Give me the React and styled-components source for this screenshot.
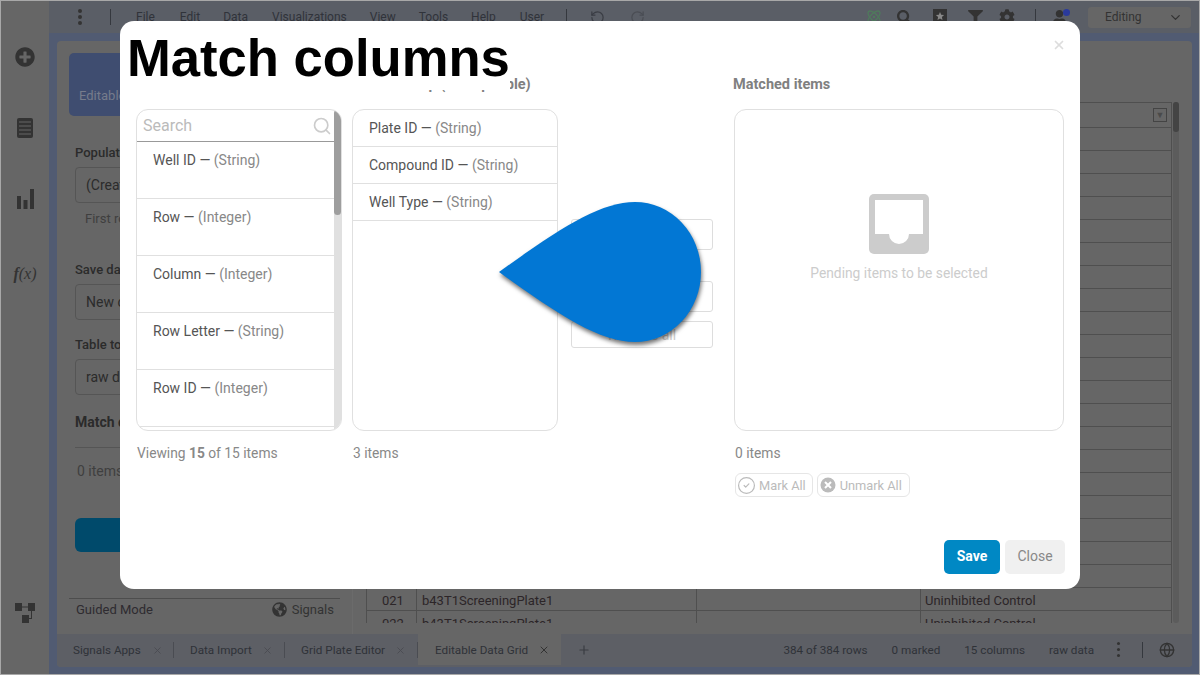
import React from 'react';
import styled, { createGlobalStyle } from 'styled-components';
import { Atom, ChevronDown, CircleCheck, Globe, Plus, RotateCcw, RotateCw, Search, X } from 'lucide-react';
import { FaCog, FaFilter, FaGlobeAmericas, FaPlusCircle, FaSearch, FaUser } from 'react-icons/fa';

const GlobalStyle = createGlobalStyle`
  html, body { margin: 0; padding: 0; }
  body { width: 1200px; height: 675px; overflow: hidden; background: #a8a8a8; font-family: Roboto, "Liberation Sans", sans-serif; }
  * { box-sizing: border-box; }
`;

// ------------------------ Page behind the modal
const Shell = styled.div`
  width: 1200px; height: 675px;
  padding: 1px;
  display: flex;
  position: relative;
`;
const Rail = styled.nav`
  width: 48px;
  background: #666;
  display: flex;
  flex-direction: column;
  align-items: center;
  padding-top: 46px;
  color: #333;
`;
const RailItem = styled.div`
  height: 73px;
  width: 100%;
  display: flex;
  justify-content: center;
  padding-top: ${(p) => p.$drop || 0}px;
  font: italic 16px "Liberation Serif", serif;
  margin-top: ${(p) => p.$push || 0}px;
`;
const Main = styled.div`
  flex: 1;
  display: flex;
  flex-direction: column;
  background: #515b72;
  min-width: 0;
`;
const TopBar = styled.header`
  height: 32px;
  background: #5a5e66;
  display: flex;
  align-items: center;
  padding: 0 8px 0 29px;
  color: #30333a;
  font-size: 12px;
`;
const Dots = styled.span`
  width: ${(p) => p.$size || 4}px; height: ${(p) => p.$size || 4}px;
  border-radius: 50%;
  background: #333;
  box-shadow: 0 -6px 0 #333, 0 6px 0 #333;
  margin: ${(p) => p.$m || '0'};
  flex: none;
`;
const Sep = styled.span`
  width: 1px; height: 16px;
  background: #35383e;
  margin: ${(p) => p.$m || '0'};
  flex: none;
`;
const MenuItem = styled.span`
  margin-right: ${(p) => p.$gap}px;
`;
const ToolIcon = styled.span`
  display: flex;
  margin-right: ${(p) => p.$gap || 0}px;
  margin-left: ${(p) => (p.$push ? 'auto' : '0')};
  color: ${(p) => p.$color || '#333'};
  position: relative;
`;
const Badge = styled.span`
  position: absolute;
  top: -1px; right: -3px;
  width: 7px; height: 7px;
  border-radius: 50%;
  background: #2a3a9c;
`;
const ModeSelect = styled.div`
  width: 103px; height: 21px;
  margin-left: 21px;
  background: #666;
  border-radius: 3px;
  display: flex;
  align-items: center;
  justify-content: space-between;
  padding: 0 8px 0 17px;
  color: #333;
`;
const Content = styled.div`
  flex: 1;
  margin: 8px 7px 7px 8px;
  border-radius: 4px;
  background: #666;
  display: flex;
  flex-direction: column;
  min-height: 0;
  overflow: hidden;
`;
const Work = styled.div`
  flex: 1;
  display: flex;
  min-height: 0;
`;
const SidePanel = styled.aside`
  width: 296px;
  padding: 12px 12px 0;
  border-right: 1px solid #6b6b6b;
  display: flex;
  flex-direction: column;
  color: #2b2b2b;
  font-size: 13px;
`;
const AppCard = styled.div`
  width: 200px; height: 63px;
  background: #3f4d70;
  border-radius: 5px;
  padding: 35px 10px 0;
  color: #767c8c;
  flex: none;
`;
const Field = styled.div`
  margin: ${(p) => p.$top}px 0 0 6px;
  font-weight: ${(p) => (p.$strong ? 700 : 500)};
  font-size: ${(p) => (p.$strong ? 14 : 13)}px;
`;
const InputBox = styled.div`
  margin: 7px 0 0 6px;
  width: 260px; height: 36px;
  border: 1px solid #555;
  border-radius: 4px;
  padding: 0 10px;
  display: flex;
  align-items: center;
  font-size: 14px;
  font-weight: 400;
`;
const Hint = styled.div`
  margin: 8px 0 0 16px;
  color: #3f3f3f;
`;
const SectionRule = styled.div`
  margin: 17px 0 0 6px;
  height: 1px;
  background: #555;
`;
const CountText = styled.div`
  margin: 15px 0 0 8px;
  font-size: 14px;
  color: #3f3f3f;
`;
const RunButton = styled.div`
  margin: 39px 0 0 6px;
  height: 34px;
  width: 260px;
  background: #004a6b;
  border-radius: 6px;
  flex: none;
`;
const SideFoot = styled.div`
  margin-top: 46px;
  height: 21px;
  border-top: 1px solid #4d4d4d;
  display: flex;
  align-items: center;
  justify-content: space-between;
  padding: 0 6px 0 7px;
  font-size: 13px;
  color: #2e2b30;
`;
const SignalsLink = styled.span`
  display: flex;
  align-items: center;
  gap: 5px;
  color: #333;
`;
const GridArea = styled.section`
  flex: 1;
  padding: 61px 12px 11px 13px;
  display: flex;
  min-width: 0;
`;
const DataGrid = styled.div`
  width: 806px;
  height: 100%;
  overflow: hidden;
  border-left: 1px solid #4f4f4f;
  border-right: 1px solid #4f4f4f;
`;
const GridHead = styled.div`
  height: 26px;
  border-top: 1px solid #4f4f4f;
  border-bottom: 1px solid #4f4f4f;
  position: relative;
`;
const HeadFilter = styled.span`
  position: absolute;
  right: 4px; top: 5px;
  width: 14px; height: 14px;
  border: 1px solid #444;
  color: #4a4a4a;
  font-size: 9px;
  line-height: 13px;
  text-align: center;
`;
const GridRow = styled.div`
  height: 23px;
  display: grid;
  grid-template-columns: 50px 280px 224px 1fr;
  border-bottom: 1px solid #4f4f4f;
  font-size: 13px;
  color: #2c2528;
`;
const GridCell = styled.div`
  padding-left: ${(p) => p.$pad || 5}px;
  border-right: 1px solid #4f4f4f;
  line-height: 26px;
  white-space: nowrap;
  overflow: hidden;
  &:last-child { border-right: 0; }
`;
const GridScroll = styled.div`
  width: 6px;
  margin-left: 1px;
  background: #5c5c5c;
  border-radius: 3px;
`;
const GridThumb = styled.div`
  height: 30px;
  background: #444;
  border-radius: 3px;
`;
const TabBar = styled.footer`
  height: 33px;
  flex: none;
  background: #5d5f65;
  display: flex;
  align-items: stretch;
  padding: 0 0 2px 0;
  font-size: 11.7px;
  line-height: 14px;
  color: #2f3238;
`;
const Tab = styled.div`
  display: flex;
  align-items: center;
  width: ${(p) => p.$w}px;
  padding-top: 1px;
  padding-left: ${(p) => (p.$active ? 17 : 16)}px;
  background: ${(p) => (p.$active ? '#666' : 'transparent')};
  position: relative;
  &::after {
    content: '';
    display: ${(p) => (p.$active ? 'none' : 'block')};
    position: absolute;
    right: 0; top: 8px;
    width: 1px; height: 16px;
    background: #4a4c52;
  }
`;
const TabClose = styled.span`
  display: flex;
  margin-left: auto;
  margin-right: ${(p) => p.$m}px;
  color: ${(p) => (p.$active ? '#333' : '#4a4c52')};
`;
const AddTab = styled.span`
  display: flex;
  align-items: center;
  margin-left: 16px;
  color: #3a3c42;
`;
const StatusGroup = styled.div`
  margin-left: auto;
  display: flex;
  align-items: center;
  gap: 24px;
  padding-top: 1px;
`;
const StatusTail = styled.div`
  display: flex;
  align-items: center;
  margin-left: 23px;
  padding-right: 17px;
`;

// ------------------------ Modal
const Modal = styled.div`
  position: absolute;
  left: 120px; top: 21px;
  width: 960px; height: 568px;
  background: #fff;
  border-radius: 14px;
  padding: 56px 15px 15px 16px;
  display: flex;
  flex-direction: column;
  color: #555;
`;
const Heading = styled.h1`
  position: absolute;
  left: 7px; top: 7px;
  margin: 0;
  padding: 0 0 2px;
  background: #fff;
  color: #000;
  font: bold 52.6px/60px "Liberation Sans", Arial, sans-serif;
  white-space: nowrap;
`;
const CloseX = styled.span`
  position: absolute;
  right: 14px; top: 17px;
  display: flex;
  color: #ddd;
`;
const Columns = styled.div`
  display: grid;
  grid-template-columns: 216px 206px 176px 330px;
`;
const ColTitle = styled.div`
  height: 14px;
  margin: 0 0 18px -1px;
  font-size: 14.5px;
  font-weight: 700;
  line-height: 16px;
  color: #808080;
  white-space: nowrap;
`;
const ListFrame = styled.div`
  width: ${(p) => p.$w || 206}px;
  height: 322px;
  border: 1px solid #e0e0e0;
  border-radius: 12px;
  overflow: hidden;
  display: flex;
`;
const ListBody = styled.div`
  flex: 1;
  min-width: 0;
`;
const SearchRow = styled.div`
  height: 32px;
  border-bottom: 1px solid #999;
  display: flex;
  align-items: center;
  justify-content: space-between;
  padding: 0 2px 0 6px;
  font-size: 16px;
  color: #bbb;
`;
const ListRow = styled.div`
  height: ${(p) => p.$h}px;
  border-bottom: 1px solid #e0e0e0;
  padding: 10px 0 0 16px;
  font-size: 14px;
  line-height: 16px;
  color: #555;
  white-space: nowrap;
`;
const TypeText = styled.span`
  color: #888;
`;
const ScrollTrack = styled.div`
  width: 7px;
  background: #e0e0e0;
  flex: none;
`;
const ScrollThumb = styled.div`
  height: 105px;
  background: #9e9e9e;
  border-radius: 4px;
`;
const Caption = styled.div`
  margin-top: 14px;
  font-size: 13.8px;
  line-height: 16px;
  color: #888;
  padding-left: 1px;
`;
const MoveButtons = styled.div`
  padding: 142px 21px 0 13px;
  display: flex;
  flex-direction: column;
  align-items: stretch;
`;
const MoveButton = styled.div`
  height: ${(p) => p.$h}px;
  margin-top: ${(p) => p.$top}px;
  border: 1px solid #ddd;
  border-radius: 3px;
  display: flex;
  align-items: center;
  justify-content: center;
  font-size: 14px;
  color: #ccc;
`;
const EmptyState = styled.div`
  flex: 1;
  display: flex;
  flex-direction: column;
  align-items: center;
  padding-top: 84px;
  font-size: 13.8px;
  color: #ccc;
  gap: 11px;
`;
const MarkRow = styled.div`
  margin-top: 12px;
  display: flex;
  gap: 4px;
  padding-left: 1px;
`;
const MarkButton = styled.div`
  height: 24px;
  border: 1px solid #e6e6e6;
  border-radius: 6px;
  display: flex;
  align-items: center;
  gap: ${(p) => p.$gap}px;
  padding: 0 ${(p) => p.$right}px 0 ${(p) => p.$left}px;
  font-size: 12.8px;
  color: #bbb;
`;
const FooterRow = styled.div`
  margin-top: auto;
  display: flex;
  justify-content: flex-end;
  gap: 5px;
`;
const ActionButton = styled.div`
  width: ${(p) => p.$w}px;
  height: 34px;
  padding-bottom: 2px;
  border-radius: 5px;
  display: flex;
  align-items: center;
  justify-content: center;
  font-size: 14px;
  font-weight: ${(p) => (p.$primary ? 700 : 400)};
  background: ${(p) => (p.$primary ? '#0088c4' : '#f0f0f0')};
  color: ${(p) => (p.$primary ? '#fff' : '#888')};
`;
const Drop = styled.svg`
  position: absolute;
  left: 372px; top: 174px;
  width: 220px; height: 156px;
  overflow: visible;
  filter: drop-shadow(1px 3px 2px rgba(0, 0, 0, 0.55));
`;

const leftItems = [
  ['Well ID', 'String'],
  ['Row', 'Integer'],
  ['Column', 'Integer'],
  ['Row Letter', 'String'],
  ['Row ID', 'Integer'],
  ['Column ID', 'Integer'],
];
const midItems = [
  ['Plate ID', 'String'],
  ['Compound ID', 'String'],
  ['Well Type', 'String'],
];
const rowNumbers = Array.from({ length: 22 }, (_, i) => String(i + 1).padStart(3, '0'));

function TableIcon() {
  return (
    <svg width="16" height="20" viewBox="0 0 16 20">
      <rect x="0" y="0" width="16" height="20" rx="2" fill="#333" />
      <path d="M2 4h12M2 8h12M2 12h12M2 16h12" stroke="#666" strokeWidth="1.2" />
    </svg>
  );
}
function BarsIcon() {
  return (
    <svg width="17" height="20" viewBox="0 0 17 20" fill="#333">
      <rect x="0" y="7" width="4" height="13" />
      <rect x="6.5" y="11" width="4" height="9" />
      <rect x="13" y="0" width="4" height="20" />
    </svg>
  );
}
function FlowIcon() {
  return (
    <svg width="20" height="20" viewBox="0 0 20 20" fill="#333">
      <rect x="0" y="0" width="7" height="8" />
      <rect x="13" y="0" width="7" height="8" />
      <rect x="7" y="12" width="7" height="8" />
      <path d="M7 3.5h6v1H7zM16 8h1v8h-3v-1h2z" />
    </svg>
  );
}
function StarBoxIcon() {
  return (
    <svg width="14" height="16" viewBox="0 0 14 16">
      <rect width="14" height="16" fill="#333" />
      <path d="M7 3l1.2 2.7 2.9.3-2.2 2 .6 2.9L7 9.4 4.5 10.9l.6-2.9-2.2-2 2.9-.3z" fill="#888" />
    </svg>
  );
}
function InboxIcon() {
  return (
    <svg width="60" height="60" viewBox="0 0 60 60">
      <rect width="60" height="60" rx="5" fill="#ccc" />
      <path d="M6 6h48v34H40a10 10 0 0 1-20 0H6z" fill="#fff" />
    </svg>
  );
}
function UnmarkIcon() {
  return (
    <svg width="16" height="16" viewBox="0 0 16 16">
      <circle cx="8" cy="8" r="7.5" fill="#bbb" />
      <path d="M5 5l6 6M11 5l-6 6" stroke="#fff" strokeWidth="2" />
    </svg>
  );
}

export default function App() {
  return (
    <>
      <GlobalStyle />
      <Shell>
        <Rail>
          <RailItem><FaPlusCircle size={20} /></RailItem>
          <RailItem><TableIcon /></RailItem>
          <RailItem><BarsIcon /></RailItem>
          <RailItem $drop={6}><span><b>f</b>(x)</span></RailItem>
          <RailItem $push={273}><FlowIcon /></RailItem>
        </Rail>
        <Main>
          <TopBar>
            <Dots $m="0 28px 0 0" />
            <Sep $m="0 25px 0 0" />
            <MenuItem $gap={25}>File</MenuItem>
            <MenuItem $gap={23}>Edit</MenuItem>
            <MenuItem $gap={24}>Data</MenuItem>
            <MenuItem $gap={23}>Visualizations</MenuItem>
            <MenuItem $gap={23}>View</MenuItem>
            <MenuItem $gap={23}>Tools</MenuItem>
            <MenuItem $gap={24}>Help</MenuItem>
            <MenuItem $gap={22}>User</MenuItem>
            <Sep $m="0 23px 0 0" />
            <ToolIcon $gap={25} $color="#3a3d44"><RotateCcw size={15} /></ToolIcon>
            <ToolIcon $color="#4a4d54"><RotateCw size={15} /></ToolIcon>
            <ToolIcon $push $gap={15} $color="#4f7a5c"><Atom size={16} /></ToolIcon>
            <ToolIcon $gap={21}><FaSearch size={15} /></ToolIcon>
            <ToolIcon $gap={21}><StarBoxIcon /></ToolIcon>
            <ToolIcon $gap={16}><FaFilter size={15} /></ToolIcon>
            <ToolIcon $gap={20}><FaCog size={16} /></ToolIcon>
            <Sep $m="0 16px 0 0" />
            <ToolIcon><FaUser size={15} /><Badge /></ToolIcon>
            <ModeSelect>Editing<ChevronDown size={15} /></ModeSelect>
          </TopBar>
          <Content>
            <Work>
              <SidePanel>
                <AppCard>Editable Data Grid</AppCard>
                <Field $top={29}>Populate from</Field>
                <InputBox>(Create new)</InputBox>
                <Hint>First row is header</Hint>
                <Field $top={36}>Save data to</Field>
                <InputBox>New column</InputBox>
                <Field $top={17}>Table to match</Field>
                <InputBox>raw data</InputBox>
                <Field $top={19} $strong>Match columns</Field>
                <SectionRule />
                <CountText>0 items</CountText>
                <RunButton />
                <SideFoot>
                  Guided Mode
                  <SignalsLink><FaGlobeAmericas size={15} />Signals</SignalsLink>
                </SideFoot>
              </SidePanel>
              <GridArea>
                <DataGrid>
                  <GridHead><HeadFilter>▼</HeadFilter></GridHead>
                  {rowNumbers.map((n) => (
                    <GridRow key={n}>
                      <GridCell $pad={15}>{n}</GridCell>
                      <GridCell>b43T1ScreeningPlate1</GridCell>
                      <GridCell />
                      <GridCell $pad={4}>Uninhibited Control</GridCell>
                    </GridRow>
                  ))}
                </DataGrid>
                <GridScroll><GridThumb /></GridScroll>
              </GridArea>
            </Work>
            <TabBar>
              <Tab $w={117}>Signals Apps<TabClose $m={11}><X size={11} /></TabClose></Tab>
              <Tab $w={111}>Data Import<TabClose $m={12}><X size={11} /></TabClose></Tab>
              <Tab $w={133}>Grid Plate Editor<TabClose $m={12}><X size={11} /></TabClose></Tab>
              <Tab $active $w={143}>Editable Data Grid<TabClose $active $m={11}><X size={12} /></TabClose></Tab>
              <AddTab><Plus size={14} /></AddTab>
              <StatusGroup>
                <span>384 of 384 rows</span>
                <span>0 marked</span>
                <span>15 columns</span>
                <span>raw data</span>
              </StatusGroup>
              <StatusTail>
                <Dots $size={3} $m="0 22px 0 0" />
                <Sep $m="0 16px 0 0" />
                <Globe size={16} color="#333" />
              </StatusTail>
            </TabBar>
          </Content>
        </Main>
        <Modal>
          <Heading>Match columns</Heading>
          <CloseX><X size={14} strokeWidth={3} /></CloseX>
          <Columns>
            <div>
              <ColTitle>Available items</ColTitle>
              <ListFrame>
                <ListBody>
                  <SearchRow>Search<Search size={20} strokeWidth={2} color="#ccc" /></SearchRow>
                  {leftItems.map(([name, type]) => (
                    <ListRow key={name} $h={57}>{name} — <TypeText>({type})</TypeText></ListRow>
                  ))}
                </ListBody>
                <ScrollTrack><ScrollThumb /></ScrollTrack>
              </ListFrame>
              <Caption>Viewing <b>15</b> of 15 items</Caption>
            </div>
            <div>
              <ColTitle>Items to map (lookup table)</ColTitle>
              <ListFrame>
                <ListBody>
                  {midItems.map(([name, type]) => (
                    <ListRow key={name} $h={37}>{name} — <TypeText>({type})</TypeText></ListRow>
                  ))}
                </ListBody>
              </ListFrame>
              <Caption>3 items</Caption>
            </div>
            <MoveButtons>
              <MoveButton $h={31} $top={0}>Match</MoveButton>
              <MoveButton $h={31} $top={31}>Unmatch items</MoveButton>
              <MoveButton $h={27} $top={9}>Remove all</MoveButton>
            </MoveButtons>
            <div>
              <ColTitle>Matched items</ColTitle>
              <ListFrame $w={330}>
                <EmptyState>
                  <InboxIcon />
                  Pending items to be selected
                </EmptyState>
              </ListFrame>
              <Caption>0 items</Caption>
              <MarkRow>
                <MarkButton $left={1} $gap={3} $right={6}><CircleCheck size={19} strokeWidth={1.5} />Mark All</MarkButton>
                <MarkButton $left={2} $gap={4} $right={7}><UnmarkIcon />Unmark All</MarkButton>
              </MarkRow>
            </div>
          </Columns>
          <FooterRow>
            <ActionButton $primary $w={56}>Save</ActionButton>
            <ActionButton $w={60}>Close</ActionButton>
          </FooterRow>
          <Drop viewBox="0 0 220 156">
            <path d="M7 77C68 33 108 7 143 7A66 70 0 0 1 143 147C108 147 68 121 7 77Z" fill="#0277d4" />
          </Drop>
        </Modal>
      </Shell>
    </>
  );
}
